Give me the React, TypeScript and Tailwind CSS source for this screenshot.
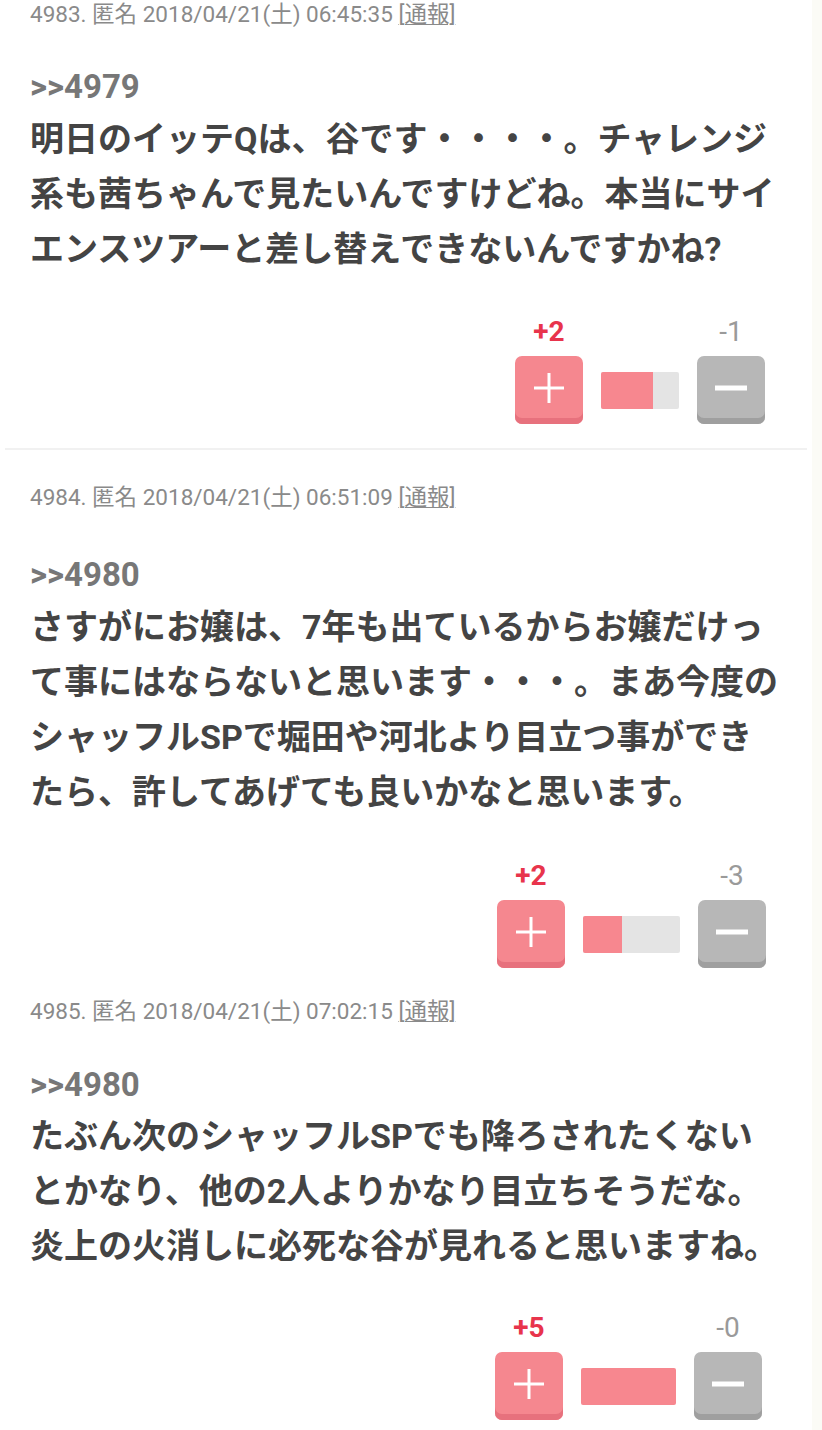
import React from "react";

type Post = {
  no: string;
  time: string;
  anchor: string;
  lines: string[];
  plus: number;
  minus: number;
  barW: number;
  headerMt: string;
  anchorMt: string;
  bodyMt: string;
  countsMt: string;
  votePr: string;
  sep: boolean;
  sepMt: string;
};

const posts: Post[] = [
  {
    no: "4983",
    time: "2018/04/21(土) 06:45:35",
    anchor: ">>4979",
    lines: [
      "明日のイッテQは、谷です・・・・。チャレンジ",
      "系も茜ちゃんで見たいんですけどね。本当にサイ",
      "エンスツアーと差し替えできないんですかね?",
    ],
    plus: 2,
    minus: 1,
    barW: 78,
    headerMt: "mt-0",
    anchorMt: "mt-[39px]",
    bodyMt: "mt-[5px]",
    countsMt: "mt-[40px]",
    votePr: "pr-[47px]",
    sep: true,
    sepMt: "mt-[24px]",
  },
  {
    no: "4984",
    time: "2018/04/21(土) 06:51:09",
    anchor: ">>4980",
    lines: [
      "さすがにお嬢は、7年も出ているからお嬢だけっ",
      "て事にはならないと思います・・・。まあ今度の",
      "シャッフルSPで堀田や河北より目立つ事ができ",
      "たら、許してあげても良いかなと思います。",
    ],
    plus: 2,
    minus: 3,
    barW: 97,
    headerMt: "mt-[33px]",
    anchorMt: "mt-[44px]",
    bodyMt: "mt-[5px]",
    countsMt: "mt-[41px]",
    votePr: "pr-[46px]",
    sep: false,
    sepMt: "mt-0",
  },
  {
    no: "4985",
    time: "2018/04/21(土) 07:02:15",
    anchor: ">>4980",
    lines: [
      "たぶん次のシャッフルSPでも降ろされたくない",
      "とかなり、他の2人よりかなり目立ちそうだな。",
      "炎上の火消しに必死な谷が見れると思いますね。",
    ],
    plus: 5,
    minus: 0,
    barW: 95,
    headerMt: "mt-[29px]",
    anchorMt: "mt-[40px]",
    bodyMt: "mt-[4px]",
    countsMt: "mt-[39px]",
    votePr: "pr-[50px]",
    sep: false,
    sepMt: "mt-0",
  },
];

const sans = "font-['Roboto','Noto_Sans_CJK_JP',sans-serif]";

function PlusButton() {
  return (
    <div className="w-[68px] h-[68px] rounded-[7px] bg-[#f5878f] shadow-[inset_0_-6px_0_#e7717d] flex items-center justify-center">
      <svg width="34" height="34" viewBox="0 0 34 34" className="-mt-[4px]">
        <line x1="17" y1="2" x2="17" y2="32" stroke="white" strokeWidth="3" />
        <line x1="2" y1="17" x2="32" y2="17" stroke="white" strokeWidth="3" />
      </svg>
    </div>
  );
}

function MinusButton() {
  return (
    <div className="w-[68px] h-[68px] rounded-[7px] bg-[#b7b7b7] shadow-[inset_0_-6px_0_#9f9f9f] flex items-center justify-center">
      <svg width="34" height="34" viewBox="0 0 34 34" className="-mt-[4px]">
        <line x1="1" y1="17" x2="33" y2="17" stroke="white" strokeWidth="5" />
      </svg>
    </div>
  );
}

function PostBlock({ p }: { p: Post }) {
  const total = p.plus + p.minus;
  const pinkW = total === 0 ? 0 : Math.round((p.barW * p.plus) / total);
  return (
    <section className={`flex flex-col ${p.headerMt}`}>
      <div className={`pl-[30px] text-[22.5px] leading-[28px] text-[#8a8a8a] whitespace-nowrap ${sans}`}>
        {p.no}. 匿名 {p.time} <span className="underline decoration-1 underline-offset-2">[通報]</span>
      </div>
      <div className={`pl-[30px] ${p.anchorMt} text-[33px] leading-[40px] font-bold text-[#777777] ${sans}`}>
        {p.anchor}
      </div>
      <div className={`pl-[30px] ${p.bodyMt} text-[34px] leading-[55px] font-bold text-[#444444] ${sans}`}>
        {p.lines.map((l, i) => (
          <div key={i} className="whitespace-nowrap">
            {l}
          </div>
        ))}
      </div>
      <div className={`flex justify-end ${p.countsMt} ${p.votePr}`}>
        <div className="flex flex-col">
          <div className={`flex justify-between text-[28px] leading-[30px] ${sans}`}>
            <div className="w-[68px] text-center font-bold text-[#e8344c]">+{p.plus}</div>
            <div className="w-[68px] text-center text-[#9a9a9a]">-{p.minus}</div>
          </div>
          <div className="mt-[9px] flex items-center gap-[18px]">
            <PlusButton />
            <div
              className="h-[37px] rounded-[2px] bg-[#e4e4e4] flex overflow-hidden"
              style={{ width: p.barW }}
            >
              <div className="h-full bg-[#f7878f]" style={{ width: pinkW }} />
            </div>
            <MinusButton />
          </div>
        </div>
      </div>
      {p.sep && <div className={`${p.sepMt} mx-[5px] h-[2px] bg-[#f1f1f1]`} />}
    </section>
  );
}

export default function App() {
  return (
    <div className="w-full min-h-[1430px] bg-white flex">
      <div className="flex-1 overflow-hidden">
        {posts.map((p) => (
          <PostBlock key={p.no} p={p} />
        ))}
      </div>
      <div className="w-[10px] bg-[#fbfbf6]" />
    </div>
  );
}
